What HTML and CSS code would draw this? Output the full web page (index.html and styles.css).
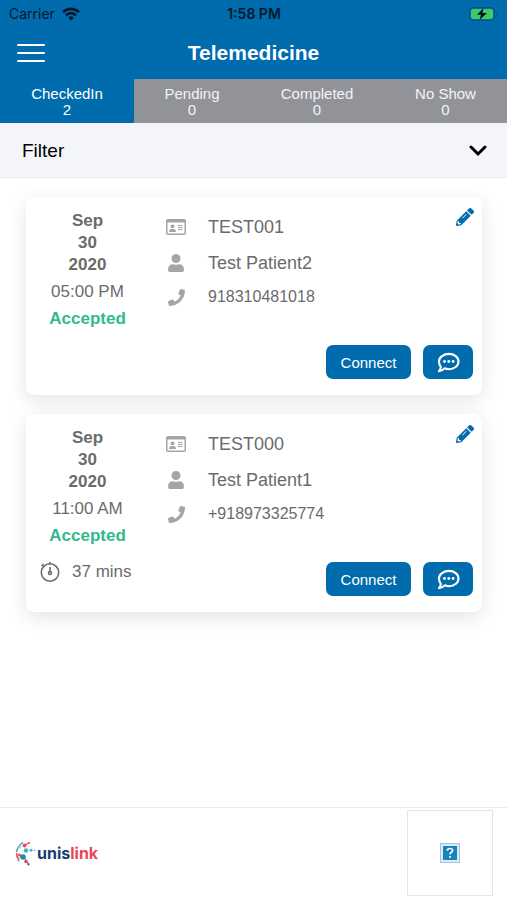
FILE: index.html
```
<!DOCTYPE html>
<html lang="en">
<head>
<meta charset="utf-8">
<meta name="viewport" content="width=device-width, initial-scale=1">
<title>Telemedicine</title>
<link rel="stylesheet" href="styles.css">
</head>
<body>
<svg class="sprite" aria-hidden="true">
  <symbol id="card-id" viewBox="0 0 20 16"><path fill="currentColor" fill-rule="evenodd" d="M2 0h16a2 2 0 0 1 2 2v12a2 2 0 0 1-2 2H2a2 2 0 0 1-2-2V2a2 2 0 0 1 2-2zM1.500 3.500V14.500H18.500V3.500z"/><circle cx="6.500" cy="7.300" r="1.900" fill="currentColor"/><path fill="currentColor" d="M3 13c0-2 1-3 2.500-3h2C9 10 10 11 10 13z"/><path stroke="currentColor" stroke-width="1" d="M12 6.500h4.500M12 8.500h4.500M12 10.500h4.500"/></symbol>
  <symbol id="user" viewBox="0 0 448 512"><path fill="currentColor" d="M224 256a128 128 0 1 0 0-256 128 128 0 0 0 0 256zm90 32h-17a174 174 0 0 1-146 0h-17A134 134 0 0 0 0 422v42a48 48 0 0 0 48 48h352a48 48 0 0 0 48-48v-42a134 134 0 0 0-134-134z"/></symbol>
  <symbol id="phone" viewBox="0 0 512 512"><path fill="currentColor" d="M493 25 389 1a24 24 0 0 0-27 14l-48 112a24 24 0 0 0 7 28l61 49A371 371 0 0 1 204 382l-49-61a24 24 0 0 0-28-7L15 362a24 24 0 0 0-14 27l24 104a24 24 0 0 0 23 19c256 0 464-207 464-464a24 24 0 0 0-19-23z"/></symbol>
  <symbol id="pencil" viewBox="0 0 512 512"><path fill="currentColor" fill-rule="evenodd" d="M498 142l-46 46c-5 5-12 5-17 0L324 77c-5-5-5-12 0-17l46-46c19-19 49-19 68 0l60 60c19 19 19 49 0 68zM284 100 22 362 0 484c-3 16 12 30 28 28l122-22 262-262c5-5 5-12 0-17L301 100c-5-5-12-5-17 0zM180 290c-4-4-4-10 0-14l100-100c4-4 10-4 14 0s4 10 0 14L194 290c-4 4-10 4-14 0zM88 424h48v36l-64 11-31-31 11-64h36z"/></symbol>
  <symbol id="chat" viewBox="0 0 24 22"><path fill="none" stroke="currentColor" stroke-width="2.200" stroke-linejoin="round" d="M12.500 2C18 2 22.500 5.500 22.500 10S18 18 12.500 18c-1.700 0-3.200-.3-4.600-.9C6.400 18.800 4.300 19.800 2 20c1-1.100 1.800-2.600 2-4.500C2.800 14 2 12.100 2 10c0-4.500 5-8 10.500-8z"/><g fill="currentColor"><circle cx="7.800" cy="10" r="1.500"/><circle cx="12.300" cy="10" r="1.500"/><circle cx="16.800" cy="10" r="1.500"/></g></symbol>
</svg>

<header class="top">
  <div class="status">
    <span class="carrier">Carrier
      <svg width="18" height="14" viewBox="0 0 18 14" aria-hidden="true"><g fill="none" stroke="currentColor" stroke-width="2.600"><path d="M1 5.200a11.300 11.300 0 0 1 16 0"/><path d="M4 8.400a7 7 0 0 1 10 0"/></g><path fill="currentColor" d="M9 13.500 6.200 10.700a4 4 0 0 1 5.600 0z"/></svg>
    </span>
    <span class="clock">1:58 PM</span>
    <svg class="battery" width="30" height="14" viewBox="0 0 30 14" role="img" aria-label="Charging"><rect x=".5" y=".5" width="25" height="13" rx="4" fill="none" stroke="#075083"/><path d="M27.500 4.500q2 2.500 0 5z" fill="#075083"/><rect x="2" y="2" width="22" height="10" rx="2" fill="#3fcb62"/><path d="M14.500 1 8 7.800h4L10.500 13 18 6h-4.500z" fill="#001320"/></svg>
  </div>
  <div class="bar">
    <button class="menu" aria-label="Menu"><span></span><span></span><span></span></button>
    <h1>Telemedicine</h1>
  </div>
</header>

<nav class="tabs">
  <a class="active" href="#checkedin">CheckedIn<span>2</span></a>
  <a href="#pending">Pending<span>0</span></a>
  <a href="#completed">Completed<span>0</span></a>
  <a href="#noshow">No Show<span>0</span></a>
</nav>

<button class="filter">Filter
  <svg width="18" height="12" viewBox="0 0 18 12" aria-hidden="true"><path d="M2 2l7 7 7-7" fill="none" stroke="currentColor" stroke-width="3" stroke-linecap="round"/></svg>
</button>

<main class="list">
  <article class="card">
    <div class="when">
      <strong>Sep</strong><strong>30</strong><strong>2020</strong>
      <span class="time">05:00 PM</span>
      <span class="state">Accepted</span>
    </div>
    <div class="info">
      <ul>
        <li><svg class="id"><use href="#card-id"/></svg>TEST001</li>
        <li><svg class="user"><use href="#user"/></svg>Test Patient2</li>
        <li class="tel"><svg class="phone"><use href="#phone"/></svg>918310481018</li>
      </ul>
      <div class="actions">
        <button class="btn connect">Connect</button>
        <button class="btn chat" aria-label="Chat"><svg><use href="#chat"/></svg></button>
      </div>
    </div>
    <button class="edit" aria-label="Edit"><svg><use href="#pencil"/></svg></button>
  </article>

  <article class="card">
    <div class="when">
      <strong>Sep</strong><strong>30</strong><strong>2020</strong>
      <span class="time">11:00 AM</span>
      <span class="state">Accepted</span>
      <span class="wait"><svg width="20" height="20" viewBox="0 0 20 20" aria-hidden="true"><g fill="none" stroke="currentColor" stroke-width="1.600"><circle cx="10" cy="10.500" r="8.700"/><path d="M10 5v4.500M10 0v2.500M1.600 4.200l2-2.200"/><circle cx="10" cy="11" r="1.500"/></g></svg>37 mins</span>
    </div>
    <div class="info">
      <ul>
        <li><svg class="id"><use href="#card-id"/></svg>TEST000</li>
        <li><svg class="user"><use href="#user"/></svg>Test Patient1</li>
        <li class="tel"><svg class="phone"><use href="#phone"/></svg>+918973325774</li>
      </ul>
      <div class="actions">
        <button class="btn connect">Connect</button>
        <button class="btn chat" aria-label="Chat"><svg><use href="#chat"/></svg></button>
      </div>
    </div>
    <button class="edit" aria-label="Edit"><svg><use href="#pencil"/></svg></button>
  </article>
</main>

<footer class="foot">
  <div class="logo">
    <svg width="22" height="26" viewBox="0 0 22 26" aria-hidden="true">
      <path d="M8 2.500Q2.500 6 1.500 12" fill="none" stroke="#2f8f9d" stroke-width="1.200"/>
      <path d="M1.500 13q0 4 2.500 7" fill="none" stroke="#e8495f" stroke-width="1.600"/>
      <path d="M8.500 6 14 3" stroke="#e8495f" stroke-width="1.400"/>
      <path d="M9 17l4.500 7" stroke="#1c7c90" stroke-width="1"/>
      <circle cx="9.500" cy="5.500" r="1.900" fill="#e8495f"/><circle cx="14" cy="3" r="1" fill="#e8495f"/>
      <circle cx="5" cy="7" r="1.500" fill="#9adbe0"/><circle cx="11" cy="10.500" r="2.300" fill="#43b4c5"/><circle cx="16" cy="10.300" r="1.500" fill="#43b4c5"/><circle cx="19.500" cy="10.300" r=".8" fill="#43b4c5"/>
      <circle cx="4.500" cy="15" r="1.500" fill="#e8495f"/><circle cx="8" cy="17" r="2.800" fill="#1690a3"/><circle cx="11" cy="21.500" r="1.800" fill="#e8495f"/><circle cx="13.500" cy="24.300" r="1.100" fill="#195b78"/><circle cx="3.500" cy="20.500" r="1" fill="#43b4c5"/>
    </svg>
    <span>unis<b>link</b></span>
  </div>
  <div class="thumb">
    <svg width="20" height="20" viewBox="0 0 20 20" role="img" aria-label="Missing image"><rect x=".5" y=".5" width="19" height="19" fill="#dcebf8" stroke="#a9c2df"/><rect x="3" y="3" width="14" height="14" fill="#1683bd"/><path d="M7.300 7.600q.2-2.100 2.700-2.100t2.600 2q0 1.200-1.500 2-1 .6-1 1.900" fill="none" stroke="#fff" stroke-width="1.700"/><rect x="9.200" y="13" width="1.800" height="1.800" fill="#fff"/></svg>
  </div>
</footer>
</body>
</html>
```
FILE: styles.css
```
* { box-sizing: border-box; }

body {
  margin: 0;
  min-height: 100vh;
  display: flex;
  flex-direction: column;
  background: #fff;
  color: #6b6b6b;
  font-family: "Liberation Sans", Arial, sans-serif;
}

button {
  border: 0;
  padding: 0;
  background: none;
  font: inherit;
  color: inherit;
}

.sprite { position: absolute; width: 0; height: 0; }

.top { background: #006bad; color: #fff; }

.status {
  display: grid;
  grid-template-columns: 1fr auto 1fr;
  align-items: center;
  height: 27px;
  padding: 0 8px 0 9px;
  color: #03192a;
  font: 14px/16px Inter, sans-serif;
}
.carrier { display: flex; align-items: center; gap: 7px; }
.clock { font-weight: 600; }
.battery { justify-self: end; }

.bar {
  display: grid;
  grid-template-columns: 60px 1fr 60px;
  align-items: center;
  height: 52px;
}
.bar h1 { margin: 0; font-size: 21px; line-height: 24px; text-align: center; }
.menu { display: grid; gap: 6px; width: 28px; margin-left: 17px; }
.menu span { height: 2px; border-radius: 1px; background: #fff; }

.tabs {
  display: grid;
  grid-template-columns: 134fr 116fr 134fr 123fr;
  height: 44px;
  background: #929299;
}
.tabs a {
  padding-top: 7px;
  color: #f4f4f6;
  font-size: 15px;
  line-height: 16px;
  text-align: center;
  text-decoration: none;
}
.tabs .active { background: #006bad; color: #fff; }
.tabs span { display: block; }

.filter {
  display: flex;
  justify-content: space-between;
  align-items: center;
  height: 55px;
  padding: 1px 20px 0 22px;
  border-bottom: 1px solid #e9eaec;
  background: #f4f5fa;
  color: #000;
  font-size: 19px;
}

.list {
  flex: 1;
  display: flex;
  flex-direction: column;
  gap: 19px;
  padding: 19px 25px 20px 26px;
}

.card {
  position: relative;
  display: grid;
  grid-template-columns: 123px 1fr;
  min-height: 198px;
  padding: 12px 9px 16px 0;
  border-radius: 8px;
  background: #fff;
  box-shadow: 0 5px 20px rgba(0, 0, 0, 0.11);
}

.when {
  display: flex;
  flex-direction: column;
  align-items: center;
  padding-top: 1px;
  font-size: 17px;
  line-height: 22px;
}
.time { margin-top: 5px; }
.state { margin-top: 5px; color: #32ba8c; font-weight: bold; }
.wait {
  display: flex;
  align-items: center;
  gap: 12px;
  align-self: flex-start;
  margin: 14px 0 0 14px;
}

.info { display: flex; flex-direction: column; padding-left: 17px; }
.info ul {
  margin: 0;
  padding: 0;
  list-style: none;
  font-size: 18px;
  line-height: 36px;
}
.info li { display: grid; grid-template-columns: 20px 1fr; column-gap: 22px; align-items: center; }
.info li svg { justify-self: center; color: #a5a5a5; }
.info .tel { font-size: 16px; line-height: 32px; }
.info ul svg.id { width: 20px; height: 16px; }
.info ul svg.user { width: 16px; height: 18px; }
.info ul svg.phone { width: 17px; height: 17px; }

.actions { display: flex; justify-content: flex-end; gap: 12px; margin-top: auto; }
.btn {
  height: 34px;
  border-radius: 7px;
  background: #006bad;
  color: #fff;
  font-size: 15px;
}
.connect { width: 85px; }
.chat { display: grid; place-items: center; width: 50px; }
.chat svg { width: 23px; height: 21px; }

.edit {
  position: absolute;
  top: 11px;
  right: 8px;
  display: grid;
  color: #006bad;
}
.edit svg { width: 18px; height: 18px; }

.foot {
  display: flex;
  justify-content: space-between;
  align-items: center;
  height: 93px;
  padding: 0 14px 2px 15px;
  border-top: 1px solid #ececec;
}
.logo {
  display: flex;
  align-items: center;
  color: #173d72;
  font: bold 16px/20px Inter, sans-serif;
}
.logo b { color: #ea4759; font-weight: inherit; }
.thumb {
  display: grid;
  place-items: center;
  width: 86px;
  height: 86px;
  border: 1px solid #e5e5e5;
}
```
